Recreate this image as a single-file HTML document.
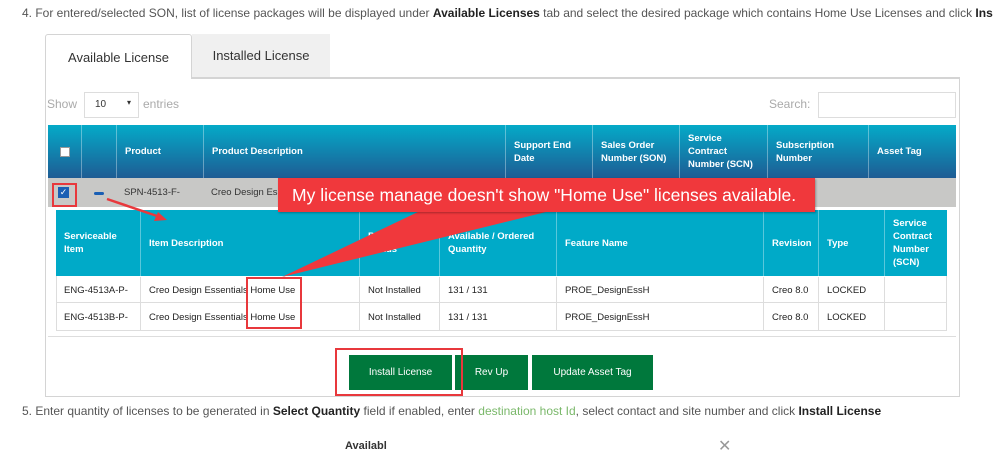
<!DOCTYPE html>
<html><head><meta charset="utf-8"><style>
*{margin:0;padding:0;box-sizing:border-box}
body{width:998px;height:448px;overflow:hidden;background:#fff;font-family:"Liberation Sans",sans-serif;position:relative;color:#333}
.a{position:absolute}
.t{font-size:12px;color:#555;white-space:nowrap}
.t b{color:#222}
.c{position:absolute;font-size:9.5px;font-weight:bold;color:#fff;line-height:13px;display:flex;align-items:center;padding-left:8px;border-left:1px solid rgba(255,255,255,.35);height:100%}
.d{position:absolute;font-size:9.5px;color:#222;display:flex;align-items:center;padding-left:8px;height:27px;border-left:1px solid #ddd}
.btn{position:absolute;top:355px;height:35px;background:#00783c;color:#fff;font-size:10px;display:flex;align-items:center;justify-content:center}
.rb{position:absolute;border:2px solid #e8383c}
</style></head><body>
<div class="a t" style="left:22px;top:6px">4. For entered/selected SON, list of license packages will be displayed under <b>Available Licenses</b> tab and select the desired package which contains Home Use Licenses and click <b>Ins</b></div>

<!-- panel -->
<div class="a" style="left:45px;top:77px;width:915px;height:320px;border:1px solid #d4d4d4;border-top:2px solid #d4d4d4"></div>
<div class="a" style="left:45px;top:34px;width:147px;height:45px;border:1px solid #d4d4d4;border-bottom:none;background:#fff;border-radius:3px 3px 0 0;font-size:13px;color:#333;display:flex;align-items:center;justify-content:center">Available License</div>
<div class="a" style="left:192px;top:34px;width:138px;height:43px;background:#f0f0f0;font-size:13px;color:#333;display:flex;align-items:center;justify-content:center">Installed License</div>

<div class="a" style="left:47px;top:97px;font-size:12px;color:#aaa">Show</div>
<div class="a" style="left:84px;top:92px;width:55px;height:26px;border:1px solid #ddd;font-size:10px;padding:6px 0 0 10px">10<span style="position:absolute;left:42px;top:5px;font-size:8px">▾</span></div>
<div class="a" style="left:143px;top:97px;font-size:12px;color:#aaa">entries</div>
<div class="a" style="left:769px;top:97px;font-size:12px;color:#aaa">Search:</div>
<div class="a" style="left:818px;top:92px;width:138px;height:26px;border:1px solid #ddd"></div>

<!-- header -->
<div class="a" style="left:48px;top:125px;width:908px;height:53px;background:linear-gradient(#04aac8,#1e5c94)">
<div class="c" style="left:0;width:33px;border:none;justify-content:center;padding:0"><span style="width:10px;height:10px;background:#fff;border:1px solid #999"></span></div>
<div class="c" style="left:33px;width:35px"></div>
<div class="c" style="left:68px;width:87px">Product</div>
<div class="c" style="left:155px;width:302px">Product Description</div>
<div class="c" style="left:457px;width:87px">Support End<br>Date</div>
<div class="c" style="left:544px;width:87px">Sales Order<br>Number (SON)</div>
<div class="c" style="left:631px;width:88px">Service<br>Contract<br>Number (SCN)</div>
<div class="c" style="left:719px;width:101px">Subscription<br>Number</div>
<div class="c" style="left:820px;width:88px">Asset Tag</div>
</div>
<div class="a" style="left:48px;top:178px;width:908px;height:29px;background:#c8c8c6"></div>
<div class="a" style="left:58px;top:187px;width:11px;height:11px;background:#1a5fb4;color:#fff;font-size:9px;line-height:11px;text-align:center">✓</div>
<div class="a" style="left:94px;top:192px;width:10px;height:3px;background:#1a5fb4;border-radius:2px"></div>
<div class="a" style="left:124px;top:187px;font-size:9.5px">SPN-4513-F-</div>
<div class="a" style="left:211px;top:187px;font-size:9.5px">Creo Design Es</div>

<!-- nested -->
<div class="a" style="left:56px;top:210px;width:891px;height:66px;background:#00aac8">
<div class="c" style="left:0;width:84px;border:none">Serviceable<br>Item</div>
<div class="c" style="left:84px;width:219px">Item Description</div>
<div class="c" style="left:303px;width:80px">Product<br>Status</div>
<div class="c" style="left:383px;width:117px">Available / Ordered<br>Quantity</div>
<div class="c" style="left:500px;width:207px">Feature Name</div>
<div class="c" style="left:707px;width:55px">Revision</div>
<div class="c" style="left:762px;width:66px">Type</div>
<div class="c" style="left:828px;width:63px">Service<br>Contract<br>Number<br>(SCN)</div>
</div>
<div class="a" style="left:56px;top:276px;width:891px;height:55px;border:1px solid #ddd;border-top:none">
<div style="position:absolute;left:0;top:26px;width:100%;border-top:1px solid #ddd"></div>
</div>
<div class="d" style="left:56px;top:277px;border:none">ENG-4513A-P-</div>
<div class="d" style="left:140px;top:277px">Creo Design Essentials Home Use</div>
<div class="d" style="left:359px;top:277px">Not Installed</div>
<div class="d" style="left:439px;top:277px">131 / 131</div>
<div class="d" style="left:556px;top:277px">PROE_DesignEssH</div>
<div class="d" style="left:763px;top:277px">Creo 8.0</div>
<div class="d" style="left:818px;top:277px">LOCKED</div>
<div class="d" style="left:884px;top:277px;width:63px"></div>
<div class="d" style="left:56px;top:304px;border:none">ENG-4513B-P-</div>
<div class="d" style="left:140px;top:304px">Creo Design Essentials Home Use</div>
<div class="d" style="left:359px;top:304px">Not Installed</div>
<div class="d" style="left:439px;top:304px">131 / 131</div>
<div class="d" style="left:556px;top:304px">PROE_DesignEssH</div>
<div class="d" style="left:763px;top:304px">Creo 8.0</div>
<div class="d" style="left:818px;top:304px">LOCKED</div>
<div class="d" style="left:884px;top:304px;width:63px"></div>
<div class="a" style="left:48px;top:336px;width:908px;border-top:1px solid #ddd"></div>

<!-- buttons -->
<div class="btn" style="left:349px;width:103px">Install License</div>
<div class="btn" style="left:455px;width:73px">Rev Up</div>
<div class="btn" style="left:532px;width:121px">Update Asset Tag</div>

<!-- annotations -->
<svg class="a" style="left:0;top:0" width="998" height="448">
<polygon points="420,211 550,211 282,277" fill="#f0383c"/>
<line x1="107" y1="199" x2="160" y2="217" stroke="#e8383c" stroke-width="2.5"/>
<polygon points="167,220 154,221 158,212" fill="#e8383c"/>
</svg>
<div class="a" style="left:278px;top:178px;width:537px;height:34px;background:#f0383c;color:#fff;font-size:17.5px;display:flex;align-items:center;padding-left:14px;box-shadow:1px 1px 2px rgba(0,0,0,.3)">My license manage doesn't show "Home Use" licenses available.</div>
<div class="rb" style="left:52px;top:183px;width:25px;height:24px"></div>
<div class="rb" style="left:246px;top:277px;width:56px;height:52px"></div>
<div class="rb" style="left:335px;top:348px;width:128px;height:48px"></div>

<div class="a t" style="left:22px;top:404px">5. Enter quantity of licenses to be generated in <b>Select Quantity</b> field if enabled, enter <span style="color:#7ab86a">destination host Id</span>, select contact and site number and click <b>Install License</b></div>
<div class="a" style="left:345px;top:440px;font-size:11px;font-weight:bold;color:#333">Availabl</div>
<div class="a" style="left:718px;top:436px;font-size:16px;color:#999">✕</div>
</body></html>
